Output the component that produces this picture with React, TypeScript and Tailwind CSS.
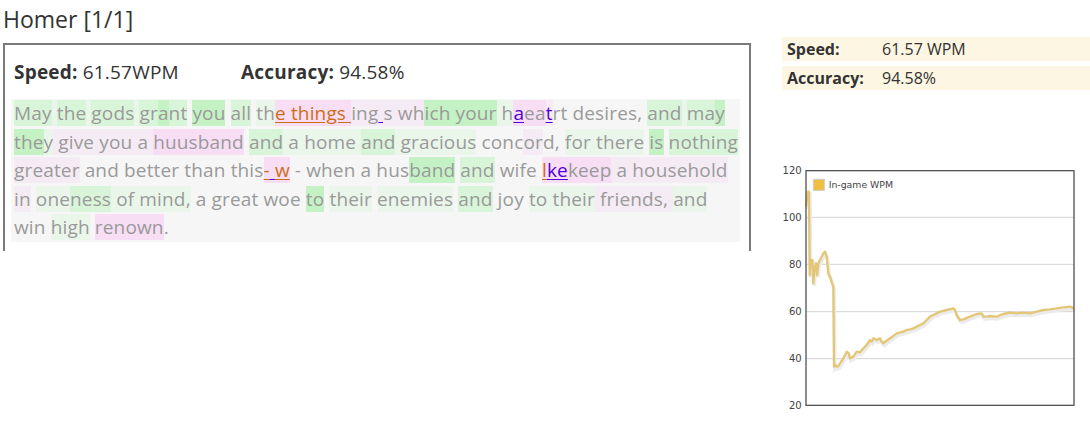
import React from "react";

type Seg = [string, string?, string?];

const bg: Record<string, string> = {
  g3: "bg-[#c4f2c4]",
  g2: "bg-[#d9f5d9]",
  g1: "bg-[#eaf6ea]",
  p1: "bg-[#f5ebf4]",
  p2: "bg-[#f7def5]",
  n: "",
};

const mark: Record<string, string> = {
  o: "text-[#cf6d17] underline decoration-[#cf6d17] underline-offset-2",
  u: "text-[#5200d9] underline decoration-[#5200d9] underline-offset-2",
};

// one array per rendered line, keeps the wrap identical to the reference
const lines: Seg[][] = [
  [
    ["May", "g2"], [" ", "g1"], ["the", "g2"], [" ", "g1"], ["gods", "g2"], [" ", "g1"],
    ["gr", "g2"], ["a", "g3"], ["nt", "g2"], [" ", "n"], ["you", "g3"], [" ", "n"],
    ["all", "g2"], [" ", "n"], ["th", "g1"], ["e things ", "p2", "o"], ["ing", "p1"],
    [" ", "p1", "u"], ["s wh", "p1"], ["ich your", "g3"], [" h", "g1"], ["a", "p2", "u"],
    ["ea", "p2"], ["t", "p1", "u"], ["rt desires, ", "n"], ["and", "g2"], [" ", "g1"],
    ["ma", "g2"], ["y", "g3"],
  ],
  [
    ["the", "g3"], ["y", "g1"], [" give you a ", "p1"], ["huusband", "p2"], [" ", "n"],
    ["and", "g2"], [" a home ", "g1"], ["and", "g2"], [" gracious", "g1"], [" conc", "n"],
    ["or", "p1"], ["d, ", "n"], ["for there", "g1"], [" ", "n"], ["is", "g3"], [" ", "n"],
    ["nothing", "g2"],
  ],
  [
    ["greater", "p1"], [" and better than ", "n"], ["this", "n"], ["-", "p2", "o"],
    [" ", "p2", "u"], ["w", "p2", "o"], [" - when a hus", "n"], ["band", "g3"], [" ", "n"],
    ["and", "g2"], [" wife ", "n"], ["l", "p2", "o"], ["ke", "p2", "u"], ["keep", "p2"],
    [" a household", "p1"],
  ],
  [
    ["in", "p1"], [" ", "n"], ["one", "g1"], ["ness", "g2"], [" of mind,", "g1"],
    [" a great woe ", "n"], ["to", "g3"], [" ", "n"], ["their", "g1"], [" ", "n"],
    ["enemies", "g1"], [" ", "n"], ["and", "g2"], [" joy ", "n"], ["to their", "g1"],
    [" friends, ", "p1"], ["and", "g1"],
  ],
  [["win ", "n"], ["high", "g1"], [" ", "n"], ["renown", "p2"], [".", "n"]],
];

const wpm: [number, number][] = [
  [108, 140], [113, 95], [117, 95], [119, 345], [122, 300], [127, 300], [130, 370],
  [133, 330], [138, 310], [141, 345], [145, 310], [150, 300], [155, 290], [160, 280],
  [165, 275], [170, 290], [175, 340], [180, 350], [188, 375], [190, 380], [192, 620],
  [196, 615], [200, 620], [205, 618], [210, 610], [220, 595], [230, 575], [236, 580],
  [240, 595], [250, 590], [260, 575], [270, 577], [280, 565], [290, 555], [300, 540],
  [305, 545], [310, 535], [320, 540], [330, 535], [335, 545], [340, 550], [345, 545],
  [360, 535], [380, 520], [400, 515], [410, 510], [420, 508], [430, 505], [440, 500],
  [450, 495], [460, 490], [470, 480], [480, 470], [490, 465], [500, 460], [510, 455],
  [530, 450], [550, 445], [555, 450], [560, 465], [570, 480], [580, 478], [600, 470],
  [620, 462], [635, 460], [640, 470], [650, 470], [660, 468], [680, 470], [700, 462],
  [720, 458], [740, 460], [760, 458], [780, 460], [800, 455], [820, 450], [840, 448],
  [860, 445], [880, 442], [900, 440], [912, 445],
];

function WpmChart() {
  const pts = wpm.map(([x, y]) => `${x},${y}`).join(" ");
  const ticks = [
    ["120", 32], ["100", 172], ["80", 313], ["60", 455], ["40", 596], ["20", 736],
  ] as const;
  return (
    <svg width="320" height="261" viewBox="0 0 960 783" className="block">
      {ticks.slice(1, 5).map(([, y]) => (
        <line key={y} x1="108" x2="912" y1={y} y2={y} stroke="#d4d4d4" strokeWidth="3" />
      ))}
      {ticks.map(([t, y]) => (
        <text key={t} x="95" y={y + 10} textAnchor="end" fontSize="30" fill="#444"
          fontFamily="'DejaVu Sans', sans-serif">{t}</text>
      ))}
      <polyline points={pts} fill="none" stroke="#ebebeb" strokeWidth="10" transform="translate(3,7)" />
      <polyline points={pts} fill="none" stroke="#e3c777" strokeWidth="7" strokeLinejoin="round" />
      <rect x="108" y="32" width="804" height="704" fill="none" stroke="#555" strokeWidth="4" />
      <rect x="130" y="58" width="33" height="33" fill="#efbf3f" stroke="#ccc" strokeWidth="3" />
      <text x="176" y="84" fontSize="28" fill="#444" fontFamily="'DejaVu Sans', sans-serif">In-game WPM</text>
    </svg>
  );
}

export default function App() {
  return (
    <div className="w-[1090px] h-[421px] bg-white overflow-hidden font-['Open_Sans',sans-serif] flex">
      {/* left column: race result */}
      <div className="w-[770px] pl-[3px]">
        <h1 className="h-[43px] pt-[3px] text-[23px] leading-[32px] text-[#333]">Homer [1/1]</h1>
        <div className="w-[748px] h-[208px] border-t-2 border-l-2 border-r-2 border-[#7a7a7a] pl-[6px]">
          <div className="h-[54px] flex items-center pl-[3px] text-[19px] tracking-[0.2px] text-[#333]">
            <span className="w-[227px]">
              <b>Speed:</b> 61.57WPM
            </span>
            <span>
              <b>Accuracy:</b> 94.58%
            </span>
          </div>
          <div className="w-[729px] bg-[#f6f6f6] pl-[3px] text-[19px] tracking-[0.15px] leading-[28.6px] text-[#9a9a9a]">
            {lines.map((line, i) => (
              <div key={i} className="whitespace-pre">
                {line.map(([t, b, m], j) => (
                  <span key={j} className={`${bg[b ?? "n"]} ${m ? mark[m] : ""}`}>{t}</span>
                ))}
              </div>
            ))}
          </div>
        </div>
      </div>

      {/* right column: summary + chart */}
      <div className="w-[320px] pt-[37px]">
        <div className="ml-[12px] flex flex-col gap-[5px] text-[16px] text-[#333]">
          <div className="h-[24px] bg-[#fcf6e2] flex items-center pl-[5px]">
            <b className="w-[95px]">Speed:</b>
            <span>61.57 WPM</span>
          </div>
          <div className="h-[24px] bg-[#fcf6e2] flex items-center pl-[5px]">
            <b className="w-[95px]">Accuracy:</b>
            <span>94.58%</span>
          </div>
        </div>
        <div className="mt-[70px]">
          <WpmChart />
        </div>
      </div>
    </div>
  );
}
